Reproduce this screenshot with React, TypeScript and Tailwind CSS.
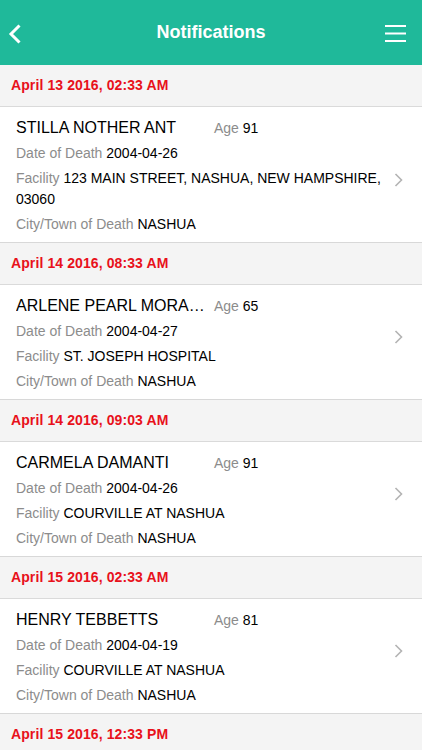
import React from "react";

type Item = {
  date: string;
  name: string;
  age: string;
  dod: string;
  facility: string;
  city: string;
  chev: number;
};

const items: Item[] = [
  { date: "April 13 2016, 02:33 AM", name: "STILLA NOTHER ANT", age: "91", dod: "2004-04-26", facility: "123 MAIN STREET, NASHUA, NEW HAMPSHIRE, 03060", city: "NASHUA", chev: 5 },
  { date: "April 14 2016, 08:33 AM", name: "ARLENE PEARL MORALES", age: "65", dod: "2004-04-27", facility: "ST. JOSEPH HOSPITAL", city: "NASHUA", chev: -5 },
  { date: "April 14 2016, 09:03 AM", name: "CARMELA DAMANTI", age: "91", dod: "2004-04-26", facility: "COURVILLE AT NASHUA", city: "NASHUA", chev: -5 },
  { date: "April 15 2016, 02:33 AM", name: "HENRY TEBBETTS", age: "81", dod: "2004-04-19", facility: "COURVILLE AT NASHUA", city: "NASHUA", chev: -5 },
];

function SectionHeader({ text }: { text: string }) {
  return (
    <div className="h-[42px] bg-[#f4f4f4] border-b border-[#dadada] flex items-center pl-[11px]">
      <span className="text-[14px] font-bold text-[#e8111b] tracking-[0.1px]">{text}</span>
    </div>
  );
}

function Card({ item }: { item: Item }) {
  return (
    <div className="bg-white border-b border-[#d8d8d8] flex">
      <div className="flex-1 min-w-0 pl-[16px] pt-[8px] pb-[5px] pr-[4px]">
        <div className="h-[26px] flex items-center">
          <span className="w-[190px] truncate text-[16px] text-black">{item.name}</span>
          <span className="ml-[8px] text-[14px] text-[#8c8c8c]">
            Age <span className="text-black">{item.age}</span>
          </span>
        </div>
        <div className="py-[2px] leading-[21px] text-[14px] text-[#8c8c8c]">
          Date of Death <span className="text-black">{item.dod}</span>
        </div>
        <div className="py-[2px] leading-[21px] text-[14px] text-[#8c8c8c]">
          Facility <span className="text-black">{item.facility}</span>
        </div>
        <div className="py-[2px] leading-[21px] text-[14px] text-[#8c8c8c]">
          City/Town of Death <span className="text-black">{item.city}</span>
        </div>
      </div>
      <div className="w-[30px] flex items-center justify-start pl-[2px]">
        <svg
          width="9"
          height="14"
          viewBox="0 0 9 14"
          style={{ transform: `translateY(${item.chev}px)` }}
          fill="none"
          stroke="#b3b3b3"
          strokeWidth="1.6"
        >
          <path d="M1.5 1 L7.5 7 L1.5 13" />
        </svg>
      </div>
    </div>
  );
}

export default function App() {
  return (
    <div
      className="w-[422px] h-[750px] overflow-hidden bg-[#f4f4f4]"
      style={{ fontFamily: '"Liberation Sans", Arial, sans-serif' }}
    >
      <div className="h-[65px] bg-[#1fb99a] flex items-center justify-between px-[8px] relative">
        <svg width="14" height="20" viewBox="0 0 14 20" fill="none" stroke="white" strokeWidth="3" className="mt-[2px]">
          <path d="M11.5 1.5 L3 10 L11.5 18.5" />
        </svg>
        <span className="absolute left-0 right-0 text-center text-white text-[18px] font-semibold pointer-events-none">
          Notifications
        </span>
        <svg width="21" height="17" viewBox="0 0 21 17" className="mr-[8px] mt-[2px]">
          <rect x="0" y="0" width="21" height="2" fill="white" />
          <rect x="0" y="7.5" width="21" height="2" fill="white" />
          <rect x="0" y="15" width="21" height="2" fill="white" />
        </svg>
      </div>
      {items.map((it, i) => (
        <div key={i}>
          <SectionHeader text={it.date} />
          <Card item={it} />
        </div>
      ))}
      <SectionHeader text="April 15 2016, 12:33 PM" />
    </div>
  );
}
